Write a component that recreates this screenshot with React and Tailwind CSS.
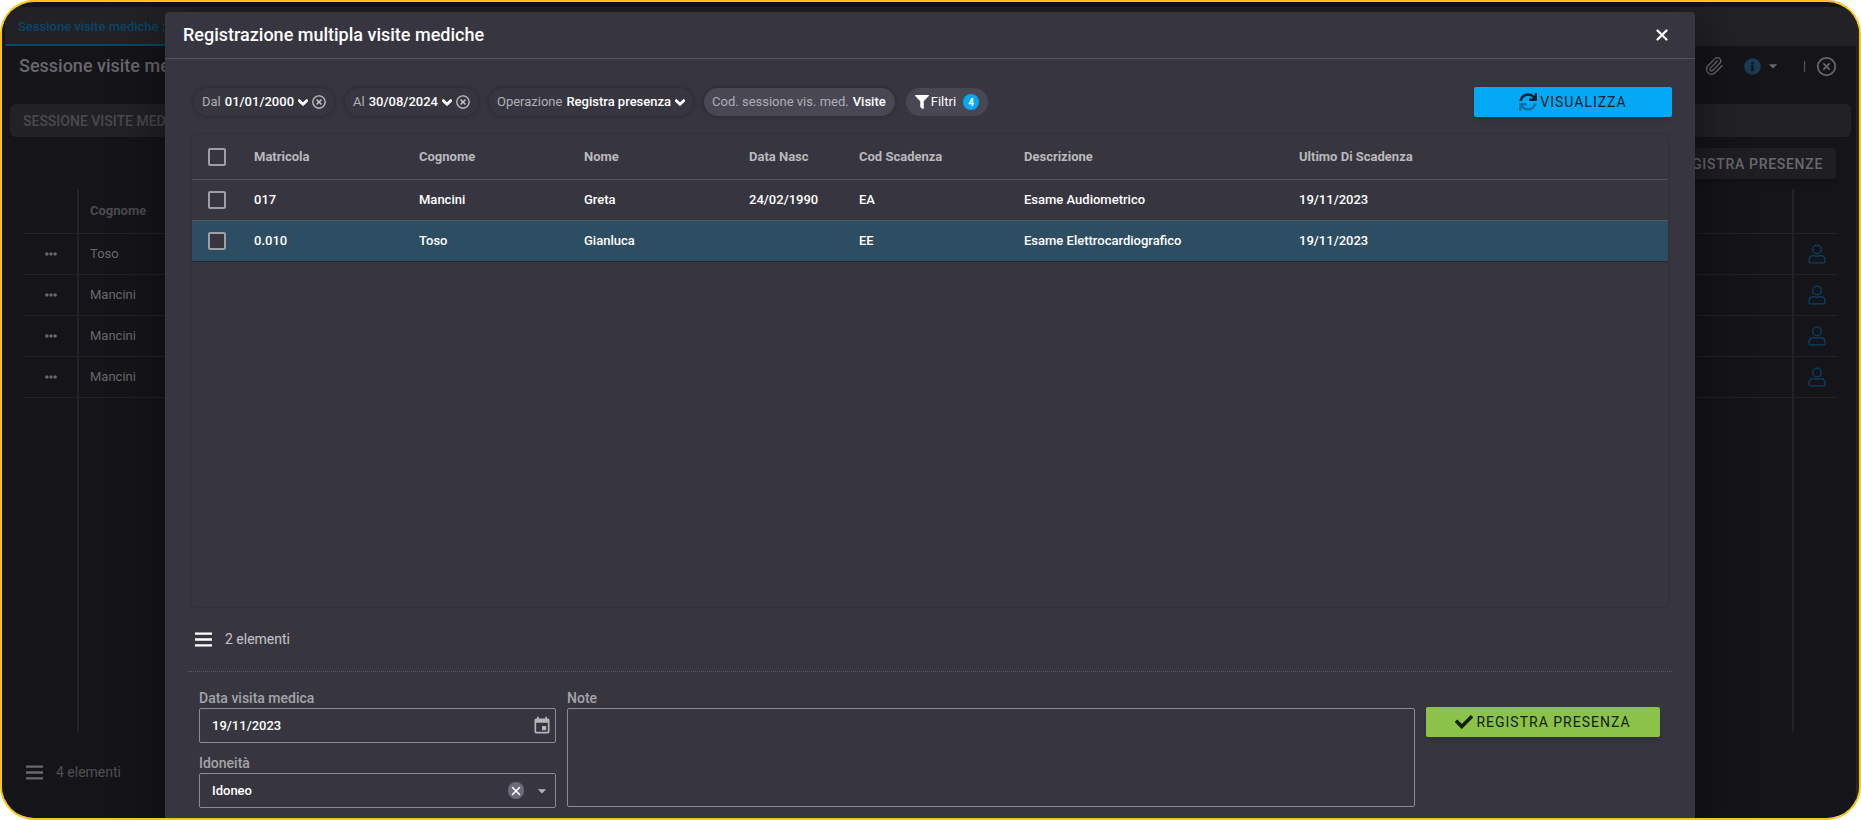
import React, { useState } from 'react';
import { FaCheck, FaChevronDown, FaEllipsisH, FaFilter, FaInfoCircle, FaRegTimesCircle } from 'react-icons/fa';
import { MdArrowDropDown, MdEvent } from 'react-icons/md';
import { CircleX, Paperclip, X } from 'lucide-react';

const visits = [
  { id: '017', surname: 'Mancini', name: 'Greta', birth: '24/02/1990', code: 'EA', description: 'Esame Audiometrico', due: '19/11/2023' },
  { id: '0.010', surname: 'Toso', name: 'Gianluca', birth: '', code: 'EE', description: 'Esame Elettrocardiografico', due: '19/11/2023', active: true },
];

const sessionRows = ['Toso', 'Mancini', 'Mancini', 'Mancini'];

const SyncIcon = () => (
  <svg viewBox="0 0 512 512" className="h-[18px] w-[18px]" fill="currentColor" aria-hidden="true">
    <path d="M440.65 12.57l4 82.77A247.16 247.16 0 0 0 255.83 8C134.73 8 33.91 94.92 12.29 209.82A12 12 0 0 0 24.09 224h49.05a12 12 0 0 0 11.67-9.26 175.91 175.91 0 0 1 317-56.94l-101.46-4.86a12 12 0 0 0-12.57 12v47.41a12 12 0 0 0 12 12H500a12 12 0 0 0 12-12V12a12 12 0 0 0-12-12h-47.37a12 12 0 0 0-11.98 12.57z" />
    <path opacity="0.4" d="M255.83 432a175.61 175.61 0 0 1-146-77.8l101.8 4.87a12 12 0 0 0 12.57-12v-47.4a12 12 0 0 0-12-12H12a12 12 0 0 0-12 12V500a12 12 0 0 0 12 12h47.35a12 12 0 0 0 12-12.6l-4.15-82.57A247.17 247.17 0 0 0 255.83 504c121.11 0 221.93-86.92 243.55-201.82a12 12 0 0 0-11.8-14.18h-49.05a12 12 0 0 0-11.67 9.26A175.86 175.86 0 0 1 255.83 432z" />
  </svg>
);

const UserIcon = () => (
  <svg viewBox="0 0 18 20" className="h-5 w-[18px]" fill="none" stroke="currentColor" strokeWidth="1.3" aria-hidden="true">
    <circle cx="9" cy="5.5" r="4.3" />
    <path d="M5.5 11.6c1.2 0 1.8.6 3.5.6s2.3-.6 3.5-.6c2.7 0 4.5 2 4.5 4.6v1.3c0 .8-.6 1.4-1.4 1.4H2.4c-.8 0-1.4-.6-1.4-1.4v-1.3c0-2.6 1.8-4.6 4.5-4.6z" />
  </svg>
);

const MenuIcon = () => (
  <svg viewBox="0 0 17 15" className="h-[15px] w-[17px]" fill="currentColor" aria-hidden="true">
    <path d="M0 .4h17v2.4H0zM0 6.3h17v2.4H0zM0 12.2h17v2.4H0z" />
  </svg>
);

const ListFooter = ({ text }) => (
  <div className="flex items-center gap-[13px]">
    <button type="button" aria-label="Menu elenco"><MenuIcon /></button>
    <span className="text-sm leading-5 opacity-70">{text}</span>
  </div>
);

const FilterChip = ({ label, value, clearable }) => (
  <div className="flex h-7 items-center rounded-full px-2 text-[13px] shadow-[0_0_5px_rgba(0,0,0,0.3)]">
    <button type="button" className="flex items-center gap-1">
      <span className="text-[#afafb3]">{label}</span>
      <span className="font-medium">{value}</span>
      <FaChevronDown className="h-[11px] w-[10px]" stroke="currentColor" strokeWidth={50} />
    </button>
    {clearable && (
      <button type="button" aria-label={`Rimuovi ${label}`} className="ml-1 text-[#c3c3c6]">
        <FaRegTimesCircle className="h-[14px] w-[14px]" />
      </button>
    )}
  </div>
);

const Checkbox = ({ label }) => (
  <input
    type="checkbox"
    aria-label={label}
    className="block h-[18px] w-[18px] appearance-none rounded-[2px] border-2 border-[#9f9fa3] bg-[#373640] checked:bg-[#03a9f4]"
  />
);

const SessionPage = () => (
  <div className="flex h-full flex-col border-l-[3px] border-r-[3px] border-l-[#16171b] border-r-[#242427] bg-[#151419] pt-[5px] text-[#69696c]">
    <div className="flex h-[39px] shrink-0 bg-[#222226]">
      <a href="#sessione" className="flex w-64 items-center border-b-2 border-[#024a6b] px-[13px] pt-0.5 text-[13px] font-medium text-[#0a4567]">
        Sessione visite mediche : 1
      </a>
    </div>

    <div className="flex h-[58px] shrink-0 items-start justify-between pt-2 pr-[19px] pl-[14px]">
      <h1 className="text-lg leading-6 font-medium">Sessione visite mediche</h1>
      <div className="flex h-6 items-center">
        <button type="button" aria-label="Allegati"><Paperclip className="h-5 w-5" strokeWidth={1.6} /></button>
        <button type="button" aria-label="Informazioni" className="ml-5 flex items-center">
          <FaInfoCircle className="h-[17px] w-[17px] text-[#1b3a57]" />
          <MdArrowDropDown className="ml-0.5 h-5 w-5" />
        </button>
        <span className="mr-2.5 ml-5 text-xs">|</span>
        <button type="button" aria-label="Chiudi pagina">
          <CircleX className="h-[21px] w-[21px]" strokeWidth={2} />
        </button>
      </div>
    </div>

    <div className="mx-[5px] flex h-[33px] shrink-0 items-center rounded-md bg-[#222226] px-[13px] text-sm font-medium text-[#4a4a4d]">
      SESSIONE VISITE MEDICHE
    </div>

    <div className="mt-[11px] mr-5 flex justify-end">
      <button type="button" className="h-[31px] rounded-[3px] bg-[#1f1e23] px-[13px] text-sm font-medium tracking-wider shadow-md">
        REGISTRA PRESENZE
      </button>
    </div>

    <div className="mx-[18px] mt-2.5 mb-3 flex min-h-0 flex-1 flex-col">
      <table className="w-full table-fixed text-[13px]">
        <colgroup>
          <col className="w-[55px]" />
          <col />
          <col className="w-[45px]" />
        </colgroup>
        <thead>
          <tr className="h-11 border-b border-[#232327]">
            <th className="border-r-2 border-[#232327]"></th>
            <th className="px-[11px] text-left font-bold text-[#4c4c4f]">Cognome</th>
            <th className="border-l-2 border-[#232327]"></th>
          </tr>
        </thead>
        <tbody>
          {sessionRows.map((surname, index) => (
            <tr key={index} className="h-[41px] border-b border-[#232327]">
              <td className="border-r-2 border-[#232327] pl-0.5">
                <button type="button" aria-label="Azioni" className="mx-auto block"><FaEllipsisH className="h-3 w-3" /></button>
              </td>
              <td className="px-[11px]">{surname}</td>
              <td className="border-l-2 border-[#232327] pl-0.5">
                <button type="button" aria-label="Dipendente" className="mx-auto block text-[#084267]"><UserIcon /></button>
              </td>
            </tr>
          ))}
        </tbody>
      </table>
      <div className="flex flex-1">
        <div className="w-14 border-r-2 border-[#232327]"></div>
        <div className="flex-1"></div>
        <div className="w-[46px] border-l-2 border-[#232327]"></div>
      </div>
    </div>

    <div className="flex h-[74px] shrink-0 items-center px-[21px] pb-[18px]">
      <ListFooter text="4 elementi" />
    </div>
  </div>
);

const VisitsTable = () => (
  <div className="mx-1 mt-[18px] flex-1 rounded-sm shadow-[0_0_3px_rgba(0,0,0,0.25)]">
    <table className="w-full table-fixed text-left text-[13px] font-medium">
      <colgroup>
        <col className="w-[51px]" />
        <col className="w-[165px]" />
        <col className="w-[165px]" />
        <col className="w-[165px]" />
        <col className="w-[110px]" />
        <col className="w-[165px]" />
        <col className="w-[275px]" />
        <col />
      </colgroup>
      <thead>
        <tr className="h-11 border-b border-[#55545d] text-[#b9b9bc]">
          <th className="pl-4"><Checkbox label="Seleziona tutti" /></th>
          <th className="px-[11px] font-bold">Matricola</th>
          <th className="px-[11px] font-bold">Cognome</th>
          <th className="px-[11px] font-bold">Nome</th>
          <th className="px-[11px] font-bold">Data Nasc</th>
          <th className="px-[11px] font-bold">Cod Scadenza</th>
          <th className="px-[11px] font-bold">Descrizione</th>
          <th className="px-[11px] font-bold">Ultimo Di Scadenza</th>
        </tr>
      </thead>
      <tbody>
        {visits.map((visit) => (
          <tr
            key={visit.id}
            className={visit.active ? 'h-[41px] border-b border-[#27272b] bg-[#2d4d63]' : 'h-[41px] border-b border-[#55545d]'}
          >
            <td className="pl-4"><Checkbox label={`Seleziona ${visit.surname}`} /></td>
            <td className="px-[11px]">{visit.id}</td>
            <td className="px-[11px]">{visit.surname}</td>
            <td className="px-[11px]">{visit.name}</td>
            <td className="px-[11px]">{visit.birth}</td>
            <td className="px-[11px]">{visit.code}</td>
            <td className="px-[11px]">{visit.description}</td>
            <td className="px-[11px]">{visit.due}</td>
          </tr>
        ))}
      </tbody>
    </table>
  </div>
);

const VisitForm = () => {
  const [date, setDate] = useState('19/11/2023');
  const [fitness, setFitness] = useState('Idoneo');

  return (
    <form className="flex border-t border-dotted border-[#5d5c66] pt-4 pr-3 pb-2.5 pl-[11px] text-[13px] font-medium">
      <div className="w-[357px] shrink-0">
        <label htmlFor="visit-date" className="block text-sm leading-5 text-[#a4a4a8]">Data visita medica</label>
        <div className="flex h-[35px] items-center rounded-[2px] border border-[#8b8b91] pr-[3px]">
          <input
            id="visit-date"
            type="text"
            value={date}
            onChange={(e) => setDate(e.target.value)}
            className="min-w-0 flex-1 bg-transparent px-3 outline-none"
          />
          <button type="button" aria-label="Apri calendario" className="text-[#b5b5b8]"><MdEvent className="h-5 w-5" /></button>
        </div>
        <label htmlFor="fitness" className="mt-2.5 block text-sm leading-5 text-[#a4a4a8]">Idoneità</label>
        <div className="relative h-[35px] rounded-[2px] border border-[#8b8b91]">
          <select
            id="fitness"
            value={fitness}
            onChange={(e) => setFitness(e.target.value)}
            className="h-full w-full appearance-none bg-transparent px-3 outline-none"
          >
            <option value=""></option>
            <option value="Idoneo">Idoneo</option>
            <option value="Non idoneo">Non idoneo</option>
          </select>
          <div className="pointer-events-none absolute inset-y-0 right-[3px] flex items-center gap-2">
            <button
              type="button"
              aria-label="Cancella"
              onClick={() => setFitness('')}
              className="pointer-events-auto flex h-[17px] w-4 items-center justify-center rounded-full bg-[#6c6b7b]"
            >
              <X className="h-[14px] w-[14px]" strokeWidth={2.5} />
            </button>
            <MdArrowDropDown className="h-5 w-5 text-[#b5b5b8]" />
          </div>
        </div>
      </div>

      <div className="ml-[11px] flex-1">
        <label htmlFor="note" className="block text-sm leading-5 text-[#a4a4a8]">Note</label>
        <textarea id="note" className="block h-[99px] w-full resize-none rounded-[2px] border border-[#8b8b91] bg-transparent p-3 outline-none" />
      </div>

      <button
        type="button"
        className="mt-[19px] ml-[11px] flex h-[30px] w-[234px] shrink-0 items-center justify-center gap-[3px] rounded-[2px] bg-[#8bc34a] text-sm font-normal tracking-[1px] text-[#15200a] shadow-md"
      >
        <FaCheck className="h-[18px] w-[18px]" />
        REGISTRA PRESENZA
      </button>
    </form>
  );
};

const VisitsDialog = () => (
  <div
    role="dialog"
    aria-labelledby="dialog-title"
    className="absolute top-2.5 right-[164px] bottom-0 left-[163px] flex flex-col rounded-t bg-[#373640] text-white shadow-[0_10px_45px_10px_rgba(0,0,0,0.35)]"
  >
    <header className="flex h-[47px] shrink-0 items-center justify-between border-b border-[#55545d] pr-6 pl-[18px]">
      <h2 id="dialog-title" className="text-lg font-medium">Registrazione multipla visite mediche</h2>
      <button type="button" aria-label="Chiudi"><X className="h-[18px] w-[18px]" strokeWidth={3} /></button>
    </header>

    <div className="flex min-h-0 flex-1 flex-col px-[23px] pt-7">
      <div className="flex items-center justify-between">
        <div className="ml-1.5 flex items-center gap-[11px]">
          <FilterChip label="Dal" value="01/01/2000" clearable />
          <FilterChip label="Al" value="30/08/2024" clearable />
          <FilterChip label="Operazione" value="Registra presenza" />
          <div className="flex h-7 items-center gap-1 rounded-full bg-[#484753] pr-[9px] pl-2 text-[13px] shadow-[0_0_5px_rgba(0,0,0,0.3)]">
            <span className="text-[#afafb3]">Cod. sessione vis. med.</span>
            <span className="font-medium">Visite</span>
          </div>
          <button type="button" className="flex h-7 items-center rounded-full bg-[#484753] px-[9px] text-[13px]">
            <FaFilter className="h-[14px] w-[14px]" />
            <span className="mr-[7px] ml-0.5">Filtri</span>
            <span className="flex h-4 w-4 items-center justify-center rounded-full bg-[#03a9f4] text-[10px] font-bold">4</span>
          </button>
        </div>
        <button
          type="button"
          className="flex h-[30px] w-[198px] items-center justify-center gap-[3px] rounded-[2px] bg-[#03a9f4] text-sm tracking-[1px] text-[#06202d] shadow-md"
        >
          <SyncIcon />
          VISUALIZZA
        </button>
      </div>

      <VisitsTable />

      <div className="flex h-16 shrink-0 items-center pl-[7px]">
        <ListFooter text="2 elementi" />
      </div>

      <VisitForm />
    </div>
  </div>
);

const App = () => {
  return (
    <main className="h-screen bg-white font-[Roboto,sans-serif]">
      <div className="relative h-full overflow-hidden rounded-[34px] border-2 border-[#ffc50d] bg-[#151419]">
        <SessionPage />
        <VisitsDialog />
      </div>
    </main>
  );
};

export default App;
